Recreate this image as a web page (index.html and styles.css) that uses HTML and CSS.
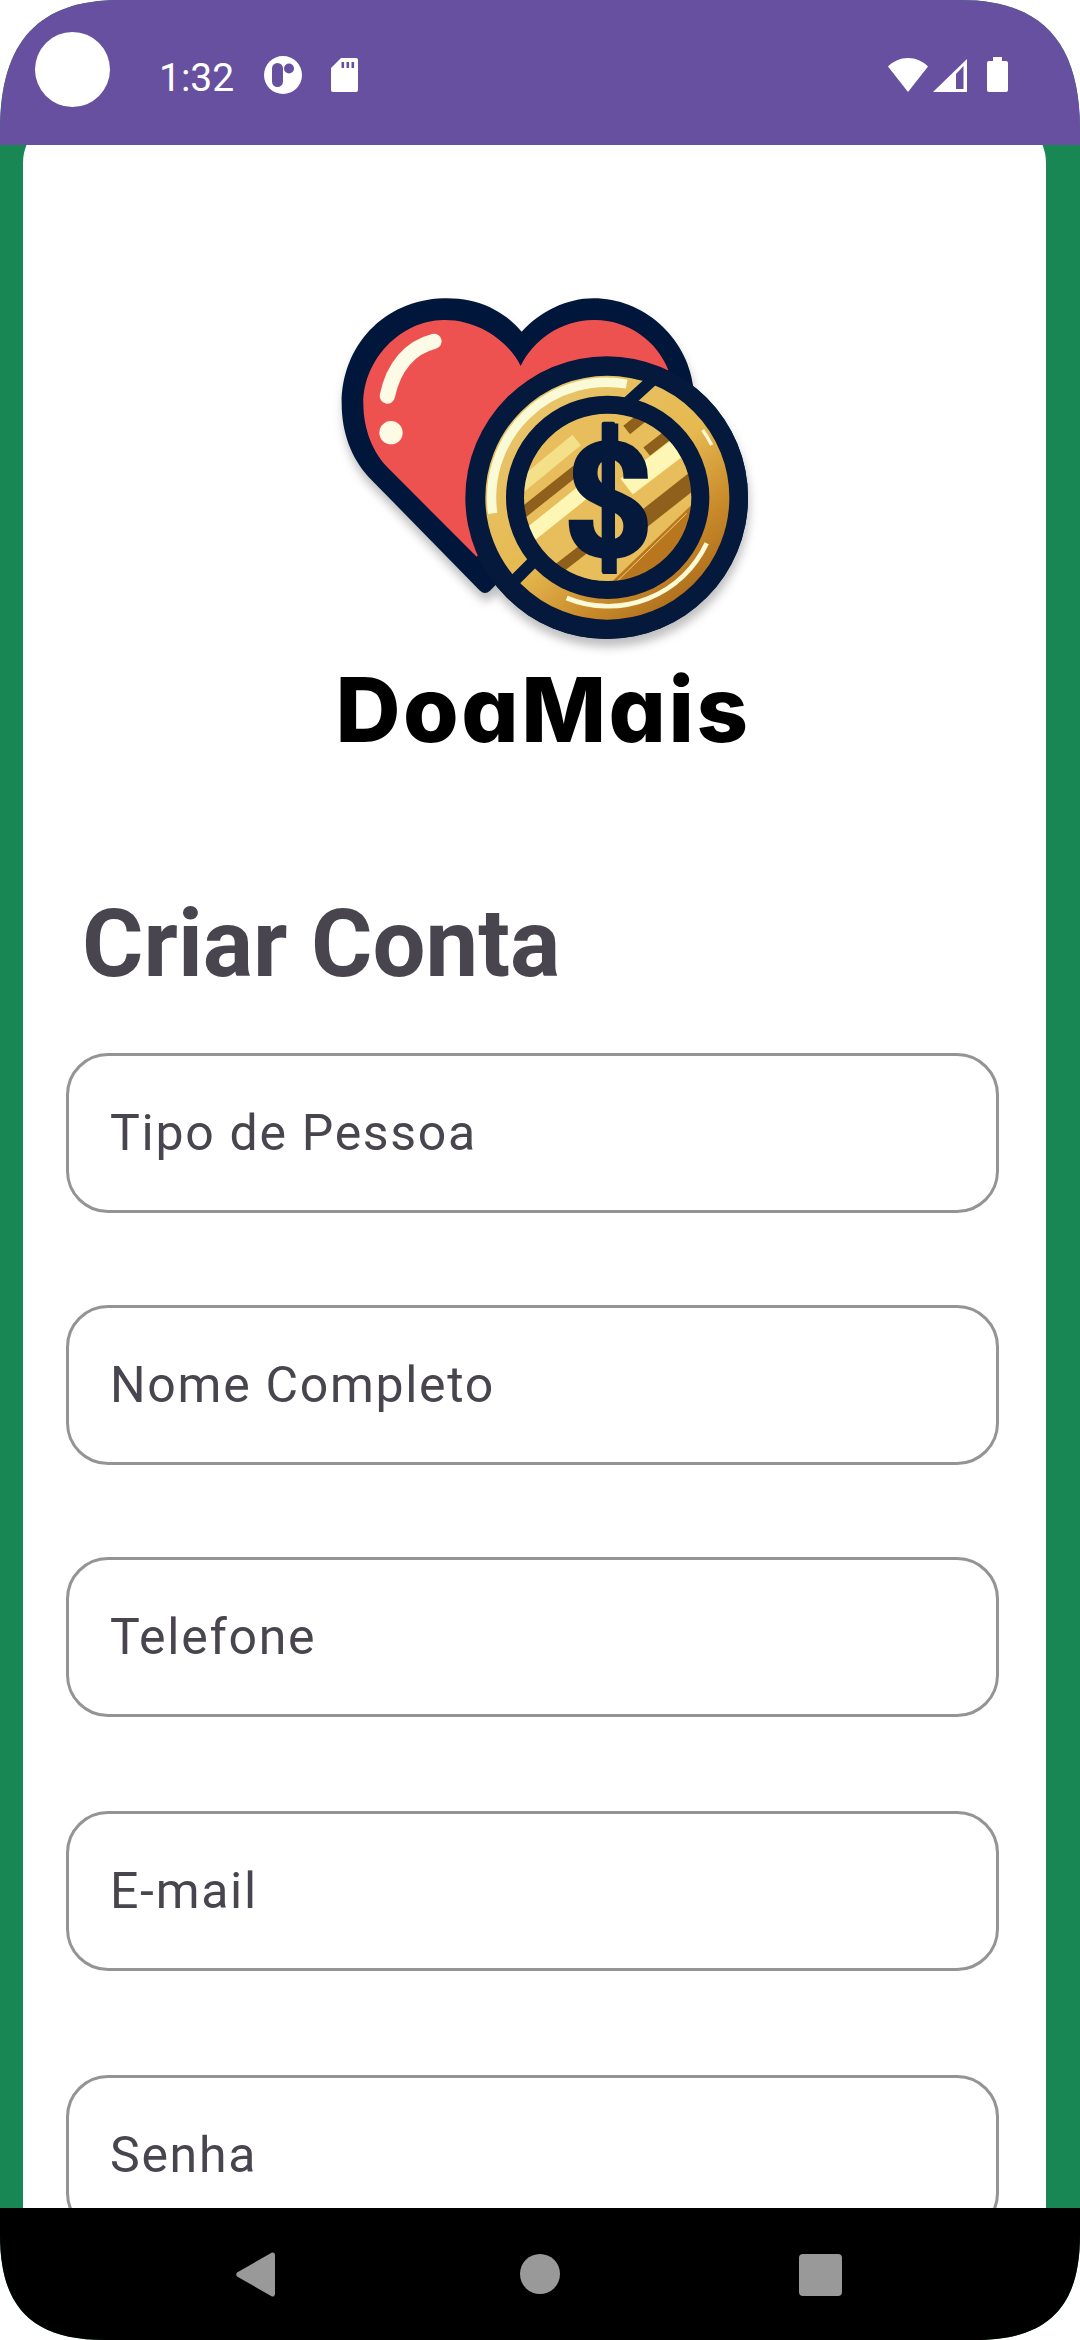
FILE: index.html
```html
<!DOCTYPE html>
<html lang="pt">
<head>
<meta charset="utf-8">
<title>DoaMais - Criar Conta</title>
<link rel="stylesheet" href="styles.css">
</head>
<body>
<div class="screen">
  <header class="status-bar">
    <span class="camera"></span>
    <span class="clock">1:32</span>
    <svg class="status-icon icon-app" viewBox="0 0 38 38"><path fill="#fff" fill-rule="evenodd" d="M19 0a19 19 0 1 1 0 38a19 19 0 1 1 0-38zM13.500 7a5.500 5.500 0 0 0-5.500 5.500v13a5.500 5.500 0 0 0 11 0v-13a5.500 5.500 0 0 0-5.500-5.500zM25 7.500a5 5 0 1 0 0 10a5 5 0 1 0 0-10z"/></svg>
    <svg class="status-icon icon-sd" viewBox="0 0 27 34"><path fill="#fff" fill-rule="evenodd" d="M10 0h15a2 2 0 0 1 2 2v30a2 2 0 0 1-2 2H2a2 2 0 0 1-2-2V10zM10.500 4v6h2.600V4zM15.500 4v6h2.600V4zM20.500 4v6h2.600V4z"/></svg>
    <span class="status-spacer"></span>
    <svg class="status-icon icon-wifi" viewBox="0 0 40 34"><path fill="#fff" d="M0 8.500C5.500 3 12.500 0 20 0s14.500 3 20 8.500L20 34z"/></svg>
    <svg class="status-icon icon-signal" viewBox="0 0 34 33"><path fill="#fff" fill-rule="evenodd" d="M0 33L34 0v33zM23 30h7.500V7L23 15z"/></svg>
    <svg class="status-icon icon-battery" viewBox="0 0 21 35"><path fill="#fff" d="M6 0h9v4h4a2 2 0 0 1 2 2v27a2 2 0 0 1-2 2H2a2 2 0 0 1-2-2V6a2 2 0 0 1 2-2h4z"/></svg>
  </header>

  <main class="content">
    <section class="card">
      <div class="logo">
        <svg class="logo-mark" viewBox="0 0 1380 1200">
          <defs>
            <clipPath id="disc"><circle cx="893" cy="682" r="253"/></clipPath>
            <linearGradient id="ring" x1="0.15" y1="0.1" x2="0.85" y2="0.95">
              <stop offset="0" stop-color="#e8c46a"/>
              <stop offset="0.5" stop-color="#e6b950"/>
              <stop offset="0.8" stop-color="#c98a2b"/>
              <stop offset="1" stop-color="#b06f1c"/>
            </linearGradient>
            <filter id="soft" x="-10%" y="-10%" width="120%" height="125%">
              <feDropShadow dx="4" dy="24" stdDeviation="14" flood-color="#000" flood-opacity="0.25"/>
            </filter>
          </defs>
          <g filter="url(#soft)">
            <path fill="#04193b" d="M635 185C580 120 500 82 400 85C220 90 95 230 95 400C95 490 125 565 175 620L510 962Q525 976 540 962L700 800L1150 350C1130 200 1000 85 850 85C770 85 690 125 635 185Z"/>
            <circle cx="890" cy="683" r="424" fill="#04193b"/>
          </g>
          <path fill="#ee5250" d="M632 288C600 220 510 148 400 150C270 152 160 270 160 400C160 480 190 550 235 595L500 860L800 500L1075 300C1040 210 950 148 850 150C750 152 670 210 632 288Z"/>
          <path fill="none" stroke="#fdfbe6" stroke-width="46" stroke-linecap="round" d="M372 214C300 232 250 290 232 378"/>
          <circle cx="243" cy="488" r="35" fill="#fdfbe6"/>
          <circle cx="890" cy="683" r="424" fill="#04193b"/>
          <circle cx="892" cy="683" r="333" fill="none" stroke="url(#ring)" stroke-width="66"/>
          <path fill="none" stroke="#fbfad6" stroke-width="28" d="M548 730A346 346 0 0 1 950 342"/>
          <path fill="none" stroke="#fbfad6" stroke-width="14" d="M770 984A326 326 0 0 0 1190 820"/>
          <path fill="none" stroke="#fbfad6" stroke-width="10" d="M1178 480A350 350 0 0 1 1205 525"/>
          <path fill="none" stroke="#04193b" stroke-width="36" d="M1055 305L945 405M590 955L690 855"/>
          <g clip-path="url(#disc)">
            <rect x="620" y="420" width="540" height="530" fill="#e8bd5c"/>
            <path fill="#b8771f" d="M880 960L1170 680V960Z"/>
            <path fill="none" stroke="#f5e08a" stroke-width="40" d="M630 650L800 510"/>
            <path fill="none" stroke="#8f5f1c" stroke-width="32" d="M630 735L800 600M950 480L1000 440M1010 545L1080 490M740 900L830 830"/>
            <path fill="none" stroke="#fdf6b4" stroke-width="45" d="M640 810L840 650"/>
            <path fill="none" stroke="#fdf6b4" stroke-width="60" d="M950 650L1120 520"/>
            <path fill="none" stroke="#8f5f1c" stroke-width="50" d="M960 780L1150 630"/>
            <path fill="none" stroke="#f0d078" stroke-width="3" d="M920 935L1130 730"/>
          </g>
          <circle cx="893" cy="682" r="278" fill="none" stroke="#04193b" stroke-width="54"/>
          <text class="logo-dollar" x="895" y="858">$</text>
          <rect x="875" y="455" width="40" height="455" rx="6" fill="#04193b"/>
        </svg>
        <div class="wordmark">DoaMais</div>
      </div>

      <h1 class="title">Criar Conta</h1>

      <form class="form">
        <div class="field field-a">Tipo de Pessoa</div>
        <div class="field field-a">Nome Completo</div>
        <div class="field field-b">Telefone</div>
        <div class="field field-c">E-mail</div>
        <div class="field field-d">Senha</div>
      </form>
    </section>
  </main>

  <nav class="nav-bar">
    <svg class="nav-icon nav-back" viewBox="0 0 39 45"><path d="M36 0.500a2.500 2.500 0 0 1 3 2.500v39a2.500 2.500 0 0 1-3 2.500L1 24.500a3.500 3.500 0 0 1 0-4z"/></svg>
    <svg class="nav-icon nav-home" viewBox="0 0 40 40"><circle cx="20" cy="20" r="20"/></svg>
    <svg class="nav-icon nav-recent" viewBox="0 0 43 42"><rect width="43" height="42" rx="4"/></svg>
  </nav>
</div>
</body>
</html>
```
FILE: styles.css
```css
* { box-sizing: border-box; }

html, body {
  margin: 0;
  padding: 0;
  background: #fff;
}

.screen {
  width: 1080px;
  height: 2340px;
  display: flex;
  flex-direction: column;
  overflow: hidden;
  background: #198754;
  clip-path: path("M0 130C0 40 40 0 120 0H960C1040 0 1080 40 1080 130V2235C1080 2305 1050 2340 975 2340H105C30 2340 0 2305 0 2235Z");
}

.status-bar {
  position: relative;
  z-index: 1;
  flex: none;
  height: 145px;
  background: #67509f;
  display: flex;
  align-items: flex-start;
  padding: 32px 72px 0 35px;
}

.camera {
  flex: none;
  width: 75px;
  height: 75px;
  border-radius: 50%;
  background: #fff;
}

.clock {
  margin: 23px 0 0 49px;
  font: 400 39px/46px Roboto, sans-serif;
  color: #fff;
}

.status-icon { flex: none; display: block; }
.icon-app { width: 38px; height: 38px; margin: 24px 0 0 30px; }
.icon-sd { width: 27px; height: 34px; margin: 26px 0 0 29px; }
.status-spacer { flex: 1; }
.icon-wifi { width: 40px; height: 34px; margin-top: 26px; }
.icon-signal { width: 34px; height: 33px; margin: 27px 0 0 5px; }
.icon-battery { width: 21px; height: 35px; margin: 25px 0 0 20px; }

.content {
  flex: 1;
  min-height: 0;
  overflow: hidden;
  padding: 0 34px 0 23px;
}

.card {
  margin-top: -30px;
  padding: 155px 47px 0 43px;
  background: #fff;
  border-radius: 48px;
  min-height: 2400px;
}

.logo {
  width: 460px;
  margin-left: 244px;
  text-align: center;
}

.logo-mark {
  display: block;
  width: 460px;
  height: 400px;
}

.logo-dollar {
  font: 700 480px Roboto, sans-serif;
  fill: #04193b;
  stroke: #04193b;
  stroke-width: 6px;
  text-anchor: middle;
}

.wordmark {
  margin: -15px 0 0 6px;
  font: 800 90px/110px Inter, sans-serif;
  font-feature-settings: "cv11" 1;
  color: #000;
  letter-spacing: 2.500px;
}

.title {
  margin: 124px 0 0 16px;
  font: 700 94px/110px Roboto, sans-serif;
  color: #49454f;
}

.form {
  margin-top: 54px;
}

.field {
  height: 160px;
  padding-left: 41px;
  border: 3px solid #949494;
  border-radius: 42px;
  display: flex;
  align-items: center;
  font: 400 50px/72px Roboto, sans-serif;
  letter-spacing: 1.700px;
  color: #49454f;
}

.field-a { margin-bottom: 92px; }
.field-b { margin-bottom: 94px; }
.field-c { margin-bottom: 104px; }

.nav-bar {
  position: relative;
  z-index: 1;
  flex: none;
  height: 132px;
  background: #000;
}

.nav-icon {
  position: absolute;
  fill: #999;
}

.nav-back { left: 236px; top: 44px; width: 39px; height: 45px; }
.nav-home { left: 520px; top: 46px; width: 40px; height: 40px; }
.nav-recent { left: 799px; top: 46px; width: 43px; height: 42px; }
```
